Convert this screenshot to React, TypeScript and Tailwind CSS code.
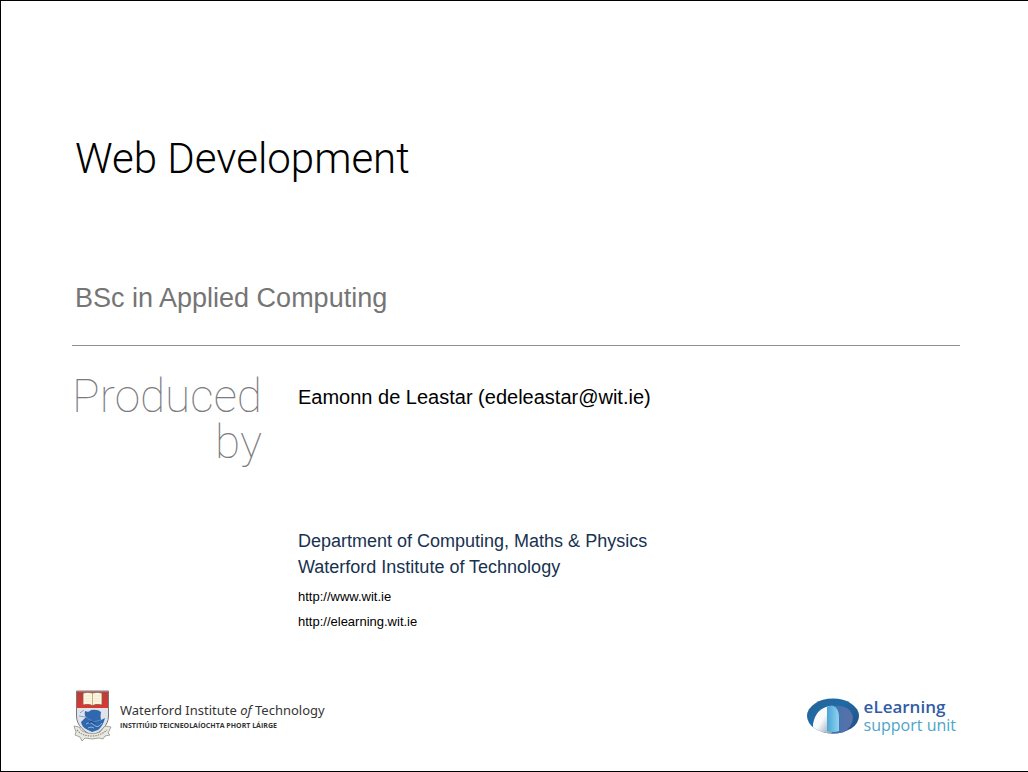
function Crest() {
  return (
    <svg viewBox="0 0 40 54" className="h-[54px] w-10 shrink-0" aria-hidden="true">
      <defs>
        <linearGradient id="red" x1="0" x2="0" y1="0" y2="1">
          <stop offset="0" stopColor="#b5403d" />
          <stop offset="1" stopColor="#dc3630" />
        </linearGradient>
      </defs>
      <path d="M4.500 2H36.500V27C36.500 37 28 43 20.500 47C13 43 4.500 37 4.500 27Z" fill="#dfe4ec" stroke="#7c7674" strokeWidth="1" />
      <path d="M5 2.500H36V19H5Z" fill="url(#red)" />
      <path d="M11 4Q16 2.500 20.500 4Q25 2.500 30 4V16Q25 14.500 20.500 16.500Q16 14.500 11 16Z" fill="#fdf6e0" stroke="#8c5a45" strokeWidth=".8" />
      <path d="M20.500 4V16" stroke="#b59c76" strokeWidth=".8" />
      <path d="M13 7H19M13 9.500H19M13 12H19M22 7H28M22 9.500H28M22 12H28" stroke="#ecdfbd" strokeWidth=".6" />
      <path d="M9 33L14 28Q12 26 13 22Q17 24 19 21Q26 20 29 23Q28 27 29 31L33 29Q31 37 26 41L20 43L14 40Q10 38 9 33Z" fill="#2f68ae" />
      <path d="M8 24L12 21M7 27L14 28L21 33L29 31" stroke="#6d90bb" strokeWidth=".8" fill="none" />
      <path d="M14 35Q18 32 22 36T30 34M16 39Q19 37 22 39" stroke="#92b4da" strokeWidth="1" fill="none" />
      <path d="M17 34Q20 31 23 35" stroke="#1c4789" strokeWidth="1.200" fill="none" />
      <path d="M2 37L7 38Q9 43 15 44Q22 46 28 43L33 37L39 38L36 44L38 46L33 47L31 50L27 49Q20 51 13 49L10 52L8 48L3 46L4 43Z" fill="#e9e9e2" stroke="#929087" strokeWidth=".8" />
      <path d="M5 41L8 44Q13 47 20 47Q28 47 35 41" stroke="#85847c" strokeWidth="1.100" strokeDasharray="1.500 1" fill="none" />
    </svg>
  );
}

function ArchMark() {
  return (
    <svg viewBox="0 0 54 36" className="h-9 w-[54px] shrink-0" aria-hidden="true">
      <defs>
        <linearGradient id="ring" x1="0" x2="1" y1="0" y2="1">
          <stop offset="0" stopColor="#286196" />
          <stop offset=".4" stopColor="#1f6ba5" />
          <stop offset="1" stopColor="#264b86" />
        </linearGradient>
        <linearGradient id="wall" x1="0" x2="1" y1="0" y2="1">
          <stop offset="0" stopColor="#ffffff" />
          <stop offset=".5" stopColor="#f6f8f9" />
          <stop offset="1" stopColor="#8798a8" />
        </linearGradient>
        <linearGradient id="door" x1="0" x2="1">
          <stop offset="0" stopColor="#4ba3d6" />
          <stop offset="1" stopColor="#8dd5ee" />
        </linearGradient>
        <linearGradient id="side" x1="0" x2="1">
          <stop offset="0" stopColor="#3f74b2" />
          <stop offset="1" stopColor="#5c70a8" />
        </linearGradient>
        <clipPath id="oval">
          <ellipse cx="27" cy="18" rx="26" ry="17.500" />
        </clipPath>
      </defs>
      <ellipse cx="27" cy="18" rx="26" ry="17.500" fill="url(#ring)" />
      <g clipPath="url(#oval)">
        <path d="M26 8Q44 6 47 19Q47 29 36 36H25Z" fill="url(#side)" />
        <path d="M7 36V26Q10 10 24 8L26 8V36Z" fill="url(#wall)" />
        <path d="M21 33V9Q27 5 31 11Q33 14 33 20V33Q27 35 21 33Z" fill="url(#door)" />
      </g>
    </svg>
  );
}

export default function App() {
  return (
    <main className="flex min-h-screen flex-col border-y border-l border-black bg-white pr-[68px] pb-7 pl-[71px] font-['Liberation_Sans',Arial,sans-serif] text-black">
      <header className="border-b border-[#8f8e90] pt-[133px] pb-[31px]">
        <h1 className="pl-[3px] font-[Roboto,sans-serif] text-[42px] leading-[50px] font-light">Web Development</h1>
        <p className="mt-[98px] pl-[3px] text-[27px] leading-8 text-[#757575]">BSc in Applied Computing</p>
      </header>

      <div className="flex gap-9 pt-[27px]">
        <p className="w-[190px] shrink-0 text-right font-[Roboto,sans-serif] text-[46px] leading-[46px] font-thin text-[#7c7c80]">
          Produced
          <br />
          by
        </p>
        <section className="pt-3">
          <p className="text-[20px] leading-6">Eamonn de Leastar (edeleastar@wit.ie)</p>
          <address className="mt-[119px] not-italic">
            <p className="text-[18px] leading-[26px] text-[#17324f]">
              Department of Computing, Maths &amp; Physics
              <br />
              Waterford Institute of Technology
            </p>
            <p className="mt-1 flex flex-col items-start text-[13px] leading-[25px]">
              <a href="http://www.wit.ie">http://www.wit.ie</a>
              <a href="http://elearning.wit.ie">http://elearning.wit.ie</a>
            </p>
          </address>
        </section>
      </div>

      <footer className="mt-auto flex items-center justify-between pr-1">
        <div className="flex items-center gap-2">
          <Crest />
          <div className="text-[#353535]">
            <p className="font-['Noto_Sans',sans-serif] text-[13px] leading-5">
              Waterford Institute <em>of</em> Technology
            </p>
            <p className="font-['Open_Sans',sans-serif] text-[7px] leading-3 font-bold">INSTITIÚID TEICNEOLAÍOCHTA PHORT LÁIRGE</p>
          </div>
        </div>
        <div className="flex items-center gap-1">
          <ArchMark />
          <div className="font-['Open_Sans',sans-serif] leading-[18px]">
            <p className="text-[17px] font-semibold text-[#315ca6]">eLearning</p>
            <p className="text-[16px] font-medium text-[#4ca5c9]">support unit</p>
          </div>
        </div>
      </footer>
    </main>
  );
}
